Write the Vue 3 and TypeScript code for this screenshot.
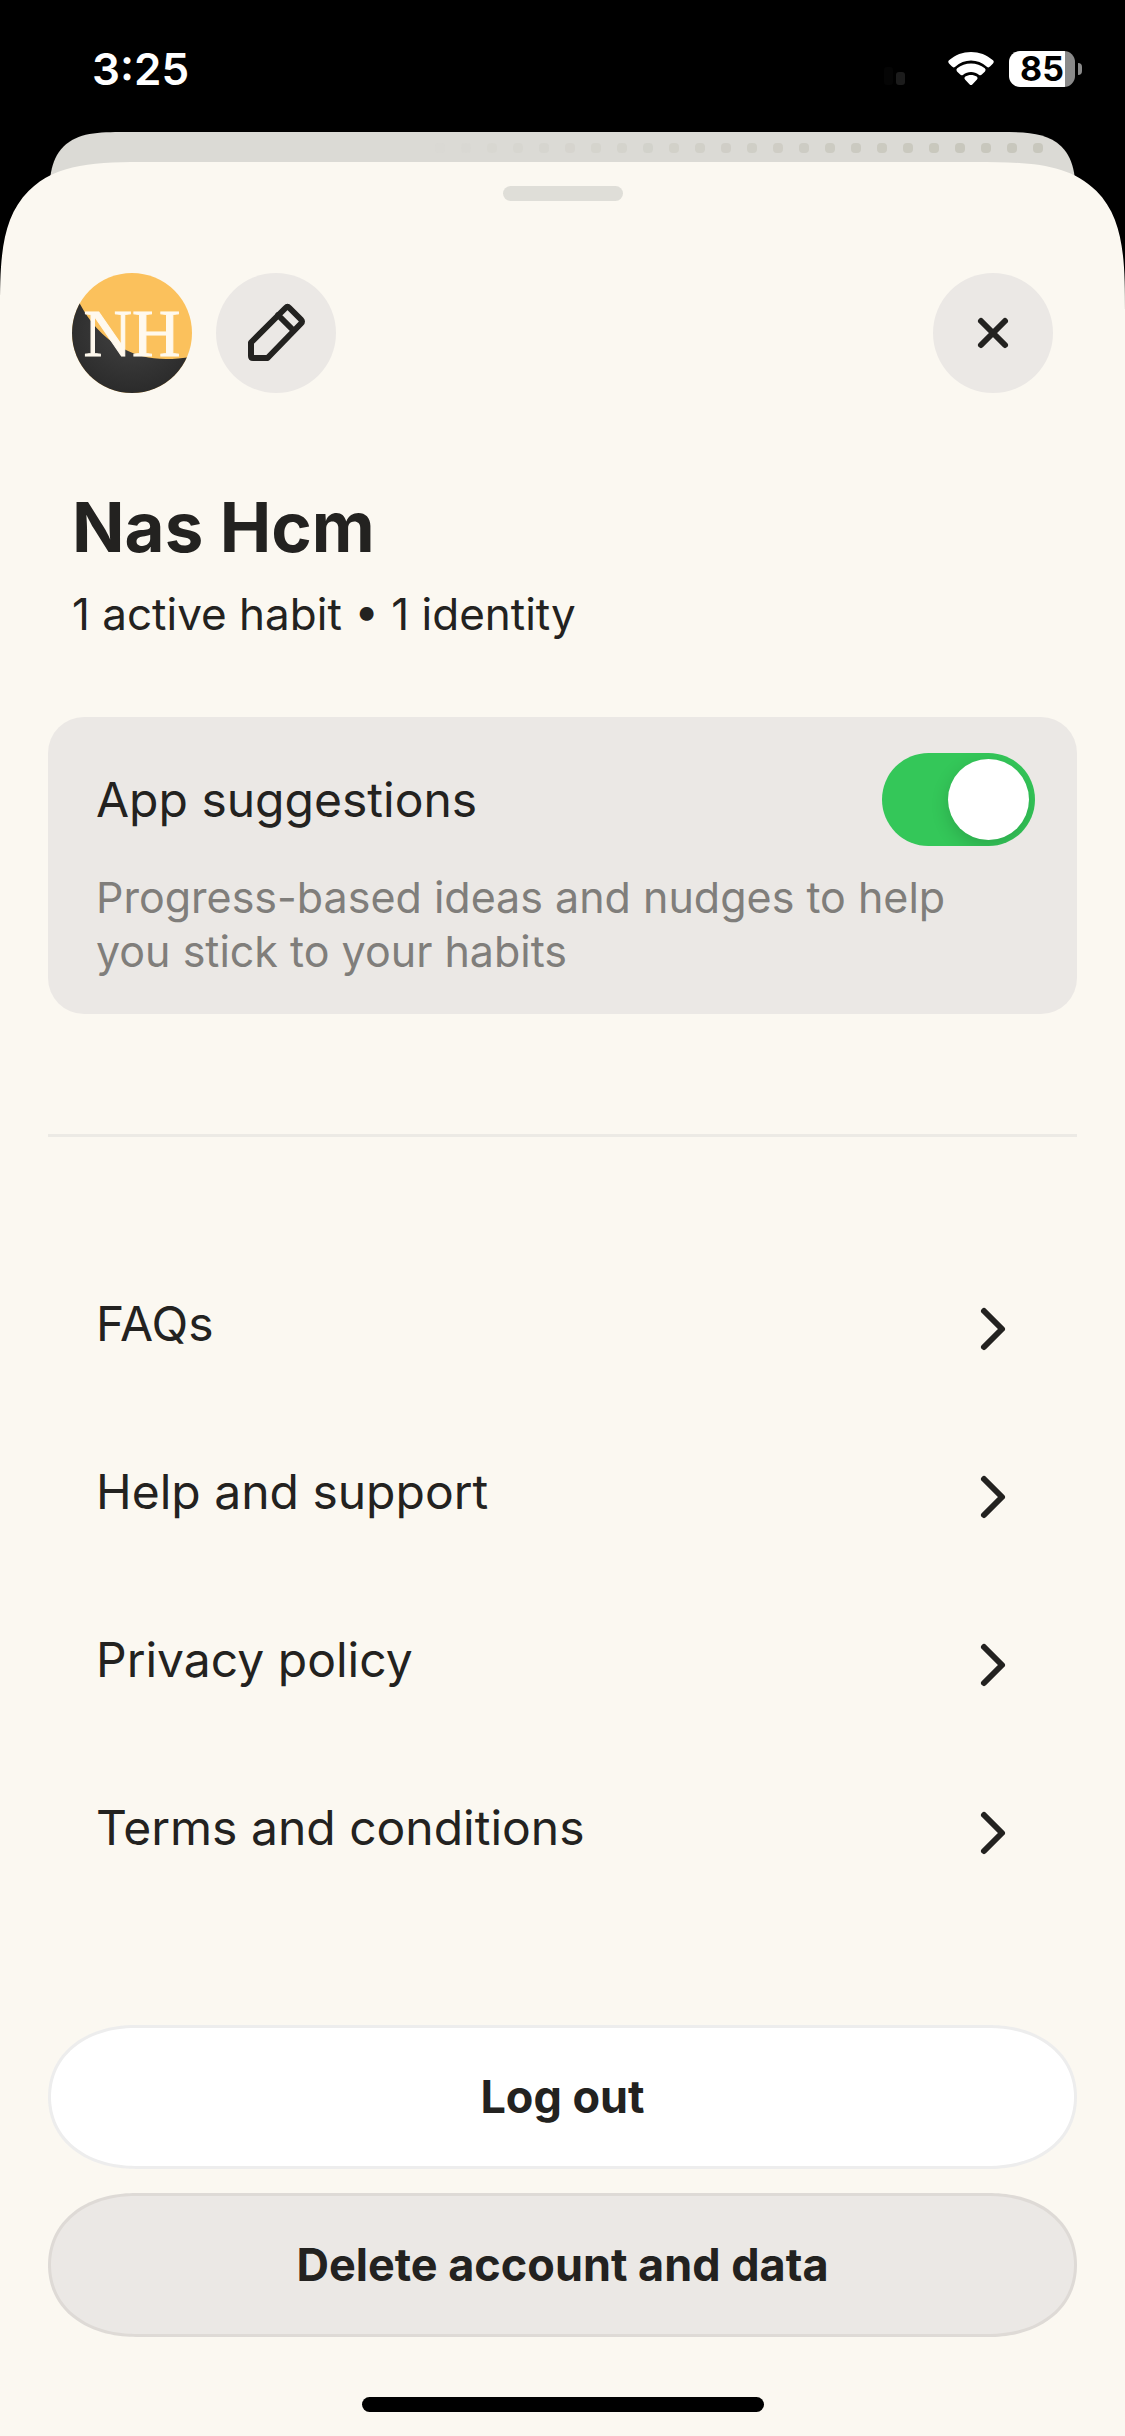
<script setup lang="ts">
import { ref } from 'vue'

const suggestions = ref(true)

const links: string[] = ['FAQs', 'Help and support', 'Privacy policy', 'Terms and conditions']

// Dots on the card behind the sheet fade in from left to right.
const dots: number[] = Array.from({ length: 24 }, (_, i) => Math.min(1, 0.03 + i * 0.05))
</script>

<template>
  <div class="screen">
    <header class="status">
      <time class="clock">3:25</time>
      <div class="indicators">
        <svg class="signal" width="24" height="36" viewBox="0 0 24 36" aria-hidden="true">
          <rect x="2" y="16" width="9" height="18" rx="3" fill="#050505" />
          <rect x="14" y="21" width="9" height="13" rx="3" fill="#1c1c1c" />
        </svg>
        <svg class="wifi" width="46" height="36" viewBox="0 0 46 36" aria-hidden="true">
          <path fill="#fff" d="M1 12.500Q-.5 10.800 1 9.300C7.200 3.900 14.800 1 23 1s15.800 2.900 22 8.300q1.500 1.500 0 3.200l-3 3.100q-1.500 1.500-3.200.1C34.200 11.700 28.800 9.600 23 9.600S11.800 11.700 7.200 15.700q-1.700 1.400-3.200-.1z" />
          <path fill="#fff" d="M9 20.400q-1.400-1.600.2-3.100C13.100 14 17.800 12.400 23 12.400S32.900 14 36.800 17.300q1.600 1.500.2 3.100l-3.200 3.200q-1.300 1.300-3 .1C28.500 21.900 25.900 21 23 21s-5.500.9-7.800 2.700q-1.700 1.200-3-.1z" />
          <path fill="#fff" d="M17 28.500q-1.500-1.500.3-2.900C18.900 24.500 20.900 24 23 24s4.100.5 5.700 1.600q1.800 1.400.3 2.900l-4.700 4.900q-1.300 1.200-2.600 0z" />
        </svg>
        <div class="battery"><span class="level">85</span></div>
        <span class="nub"></span>
      </div>
    </header>

    <div class="behind" aria-hidden="true">
      <i v-for="(o, i) in dots" :key="i" class="dot" :style="{ opacity: o }"></i>
    </div>

    <main class="sheet">
      <div class="grabber"></div>

      <div class="toolbar">
        <svg class="avatar" viewBox="0 0 120 120" role="img" aria-label="Nas Hcm">
          <defs>
            <clipPath id="avatar-clip"><circle cx="60" cy="60" r="60" /></clipPath>
            <radialGradient id="avatar-dark" cx="0.5" cy="0.45" r="0.55">
              <stop offset="0" stop-color="#424242" />
              <stop offset="1" stop-color="#2b2b2b" />
            </radialGradient>
          </defs>
          <g clip-path="url(#avatar-clip)">
            <rect width="120" height="120" fill="#fbc15c" />
            <path d="M-4 8L8 31C17 48 30 64 50 75C70 86 92 89 122 83V120H-4z" fill="url(#avatar-dark)" />
            <text x="60" y="83" text-anchor="middle" class="initials">NH</text>
          </g>
        </svg>
        <button class="round" type="button" aria-label="Edit profile">
          <svg viewBox="0 0 120 120" class="glyph">
            <path d="M37 85Q35 85 35 83V69.500L69.500 35Q71.500 33 73.500 35L85 46.500Q87 48.500 85 50.500L51.500 85ZM62 42L77.500 57.500" />
          </svg>
        </button>
        <button class="round close" type="button" aria-label="Close">
          <svg viewBox="0 0 120 120" class="glyph"><path d="M48 48L72 72M72 48L48 72" /></svg>
        </button>
      </div>

      <h1 class="name">Nas Hcm</h1>
      <p class="summary">1 active habit • 1 identity</p>

      <section class="card">
        <div class="card-row">
          <label class="item-text" for="suggestions">App suggestions</label>
          <input id="suggestions" v-model="suggestions" class="switch" type="checkbox" />
        </div>
        <p class="hint">Progress-based ideas and nudges to help you stick to your habits</p>
      </section>

      <hr class="divider" />

      <nav class="links">
        <a v-for="link in links" :key="link" class="link" href="#">
          <span class="item-text">{{ link }}</span>
          <svg class="chevron glyph" viewBox="0 0 72 72" aria-hidden="true">
            <path d="M27 18L45 36L27 54" />
          </svg>
        </a>
      </nav>

      <div class="actions">
        <button class="pill logout" type="button">Log out</button>
        <button class="pill delete" type="button">Delete account and data</button>
      </div>

      <div class="home"></div>
    </main>
  </div>
</template>

<style>
body {
  margin: 0;
  background: #000;
}
</style>

<style scoped>
.screen {
  display: flex;
  flex-direction: column;
  min-height: 100vh;
  background: #000;
  color: #232220;
  font-family: Inter, "Liberation Sans", sans-serif;
}

.status {
  display: flex;
  justify-content: space-between;
  align-items: center;
  box-sizing: border-box;
  height: 132px;
  padding: 6px 43px 0 92px;
  color: #fff;
}
.clock {
  font-size: 44px;
  line-height: 54px;
  font-weight: 600;
}
.indicators {
  display: flex;
  align-items: center;
}
.signal {
  margin-right: 42px;
}
.wifi {
  margin-right: 15px;
}
.battery {
  display: flex;
  align-items: center;
  justify-content: center;
  width: 66px;
  height: 36px;
  border-radius: 11px;
  background: linear-gradient(90deg, #fff 85%, #8a8a8a 85%);
}
.level {
  color: #000;
  font-size: 34px;
  line-height: 36px;
  font-weight: 700;
}
.nub {
  width: 4px;
  height: 12px;
  margin-left: 3px;
  border-radius: 0 4px 4px 0;
  background: #8a8a8a;
}

.behind {
  display: flex;
  justify-content: flex-end;
  gap: 16px;
  box-sizing: border-box;
  height: 90px;
  margin: 0 49px -60px;
  padding: 11px 33px 0;
  border-radius: 50px 50px 0 0;
  background: #dbdad5;
}
.dot {
  width: 10px;
  height: 10px;
  border-radius: 4px;
  background: #c8c7bd;
}

.sheet {
  display: flex;
  flex-direction: column;
  flex: 1;
  box-sizing: border-box;
  padding: 24px 48px;
  border-radius: 96px 96px 0 0;
  background: #fbf8f1;
}
.grabber {
  align-self: center;
  width: 120px;
  height: 15px;
  border-radius: 8px;
  background: #dfded8;
}

.toolbar {
  display: flex;
  gap: 24px;
  margin-top: 72px;
  padding: 0 24px;
}
.avatar {
  width: 120px;
  height: 120px;
}
.initials {
  fill: #fff9ee;
  stroke: #fff9ee;
  stroke-width: 1px;
  font-family: "Liberation Serif", serif;
  font-size: 67px;
}
.round {
  width: 120px;
  height: 120px;
  padding: 0;
  border: 0;
  border-radius: 50%;
  background: #ebe8e5;
}
.close {
  margin-left: auto;
}
.glyph {
  display: block;
  fill: none;
  stroke: #232220;
  stroke-width: 6px;
  stroke-linecap: round;
  stroke-linejoin: round;
}

.name {
  margin: 92px 24px 0;
  font-size: 69px;
  line-height: 84px;
  font-weight: 700;
}
.summary {
  margin: 18px 24px 0;
  font-size: 44px;
  line-height: 54px;
}

.card {
  margin-top: 76px;
  padding: 36px 42px 36px 48px;
  border-radius: 36px;
  background: #ebe8e5;
}
.card-row {
  display: flex;
  align-items: center;
  justify-content: space-between;
}
.item-text {
  font-size: 48px;
  line-height: 60px;
}
.switch {
  appearance: none;
  display: flex;
  justify-content: flex-start;
  box-sizing: border-box;
  width: 153px;
  height: 93px;
  margin: 0;
  padding: 6px;
  overflow: hidden;
  border-radius: 47px;
  background: #cfccc8;
}
.switch::before {
  content: "";
  width: 81px;
  height: 81px;
  border-radius: 50%;
  background: #fff;
  box-shadow: 0 6px 18px rgba(0, 0, 0, 0.16);
}
.switch:checked {
  justify-content: flex-end;
  background: #34c759;
}
.hint {
  margin: 24px 0 0;
  padding-right: 48px;
  color: #807e7b;
  font-size: 43px;
  line-height: 54px;
}

.divider {
  width: 100%;
  height: 3px;
  margin: 120px 0 108px;
  border: 0;
  background: #eceae5;
}

.links {
  display: flex;
  flex-direction: column;
}
.link {
  display: flex;
  align-items: center;
  justify-content: space-between;
  height: 168px;
  padding: 0 48px;
  color: inherit;
  text-decoration: none;
}
.link .item-text {
  padding-bottom: 10px;
}
.chevron {
  width: 72px;
  height: 72px;
}

.actions {
  display: flex;
  flex-direction: column;
  gap: 24px;
  margin-top: 108px;
}
.pill {
  height: 144px;
  border: 3px solid #ededed;
  border-radius: 80px / 72px;
  background: #fff;
  color: inherit;
  font-family: inherit;
  font-size: 45px;
  line-height: 54px;
  font-weight: 700;
}
.delete {
  border-color: #dedad6;
  background: #ebe8e5;
}

.home {
  align-self: center;
  width: 402px;
  height: 15px;
  margin-top: 60px;
  border-radius: 8px;
  background: #000;
}

/* Smoother, continuous corners where the browser can draw them. */
@supports (corner-shape: squircle) {
  .behind {
    border-radius: 76px 76px 0 0;
    corner-shape: superellipse(1.7);
  }
  .sheet {
    border-radius: 150px 150px 0 0;
    corner-shape: superellipse(1.7);
  }
  .pill {
    border-radius: 88px / 72px;
    corner-shape: superellipse(1.1);
  }
}
</style>
